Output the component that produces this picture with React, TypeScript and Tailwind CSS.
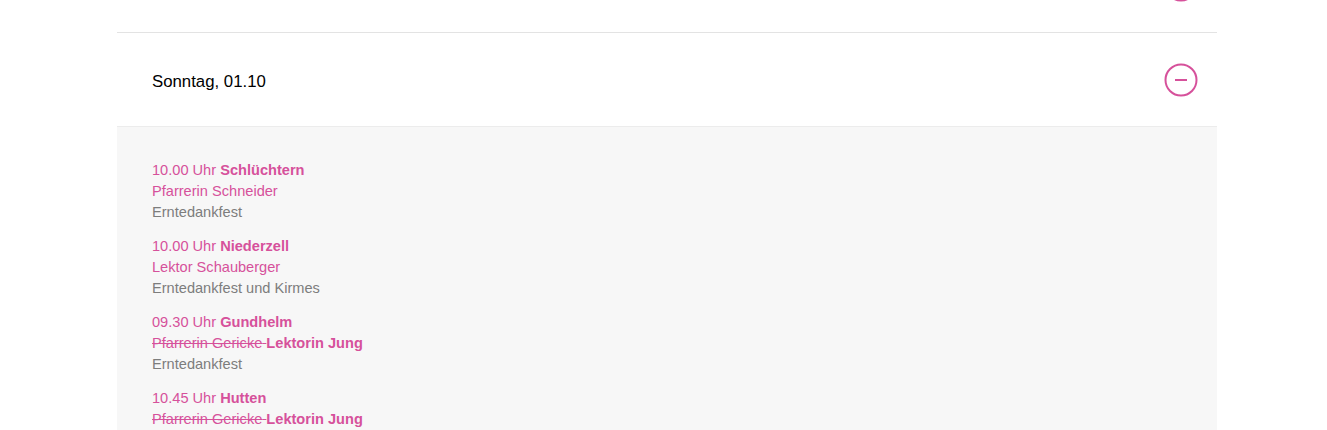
import React from 'react'

type Service = {
  time: string
  place: string
  person?: string
  struck?: string
  replacement?: string
  note: string
}

const services: Service[] = [
  { time: '10.00 Uhr', place: 'Schlüchtern', person: 'Pfarrerin Schneider', note: 'Erntedankfest' },
  { time: '10.00 Uhr', place: 'Niederzell', person: 'Lektor Schauberger', note: 'Erntedankfest und Kirmes' },
  { time: '09.30 Uhr', place: 'Gundhelm', struck: 'Pfarrerin Gericke', replacement: 'Lektorin Jung', note: 'Erntedankfest' },
  { time: '10.45 Uhr', place: 'Hutten', struck: 'Pfarrerin Gericke', replacement: 'Lektorin Jung', note: 'Erntedankfest' },
]

function ToggleIcon({ open }: { open: boolean }) {
  return (
    <svg width="34" height="34" viewBox="0 0 34 34" fill="none">
      <circle cx="17" cy="17" r="15.5" stroke="#d6519b" strokeWidth="2" />
      <line x1="11" y1="17" x2="23" y2="17" stroke="#d6519b" strokeWidth="2" />
      {!open && <line x1="17" y1="11" x2="17" y2="23" stroke="#d6519b" strokeWidth="2" />}
    </svg>
  )
}

export default function App() {
  return (
    <div className="h-[430px] overflow-hidden bg-white font-['Liberation_Sans',Arial,sans-serif]">
      <div className="ml-[117px] w-[1100px]">
        {/* previous day, scrolled mostly out of view */}
        <div className="mt-[-63px] flex h-[96px] items-center justify-between border-b border-[#e3e3e3] pl-[35px] pr-[19px]">
          <span className="text-[16.8px] text-black">Samstag, 30.09</span>
          <ToggleIcon open={false} />
        </div>

        <div className="flex h-[94px] items-center justify-between border-b border-[#ececec] pl-[35px] pr-[19px]">
          <span className="pt-[4px] text-[16.8px] text-black">Sonntag, 01.10</span>
          <ToggleIcon open />
        </div>

        <div className="bg-[#f7f7f7] pl-[35px] pt-[33px] pb-8">
          <div className="flex flex-col gap-[13px] text-[14.6px] leading-[21px]">
            {services.map((s, i) => (
              <div key={i}>
                <div className="text-[#d6519b]">
                  {s.time} <span className="font-bold">{s.place}</span>
                </div>
                <div className="text-[#d6519b]">
                  {s.person}
                  {s.struck && (
                    <>
                      <span className="line-through">{s.struck} </span>
                      <span className="font-bold">{s.replacement}</span>
                    </>
                  )}
                </div>
                <div className="text-[#7d7d7d]">{s.note}</div>
              </div>
            ))}
          </div>
        </div>
      </div>
    </div>
  )
}
